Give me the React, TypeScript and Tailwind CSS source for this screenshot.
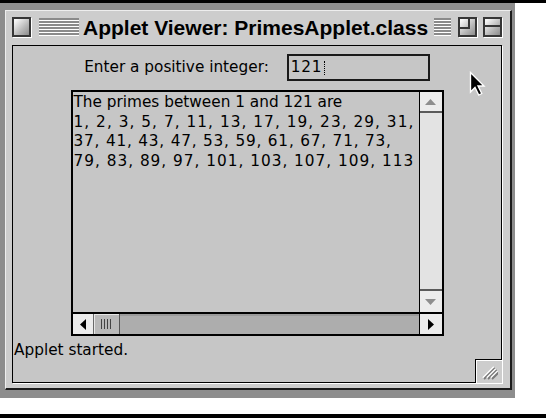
import React from 'react'

// ── Title bar bits ─────────────────────────────────────────────

function Stripes({ className }: { className: string }) {
  return (
    <div className={`flex flex-col ${className}`}>
      {[0, 1, 2, 3, 4, 5].map((i) => (
        <div key={i} className="h-[3px] border-b border-white bg-[#8a8a8a]" />
      ))}
    </div>
  )
}

function BoxButton({ kind }: { kind: 'close' | 'zoom' | 'collapse' }) {
  return (
    <div className="relative h-[20px] w-[19px] border-2 border-[#363636] bg-[linear-gradient(135deg,#f6f6f6_10%,#b8b8b8_60%,#8c8c8c)] shadow-[1px_1px_0_#ffffff]">
      {kind === 'zoom' && (
        <div className="absolute left-0 top-0 h-[10px] w-[10px] border-b-2 border-r-2 border-[#363636]" />
      )}
      {kind === 'collapse' && (
        <div className="absolute left-0 right-0 top-[6px] h-[2px] bg-[#363636]" />
      )}
    </div>
  )
}

// ── Scrollbar bits ─────────────────────────────────────────────

function Triangle({ dir, color }: { dir: 'up' | 'down' | 'left' | 'right'; color: string }) {
  const paths = {
    up: 'M0 6 L5.5 0 L11 6 Z',
    down: 'M0 0 L11 0 L5.5 6 Z',
    left: 'M6 0 L6 11 L0 5.5 Z',
    right: 'M0 0 L0 11 L6 5.5 Z',
  }
  const vertical = dir === 'up' || dir === 'down'
  return (
    <svg width={vertical ? 11 : 6} height={vertical ? 6 : 11} viewBox={vertical ? '0 0 11 6' : '0 0 6 11'}>
      <path d={paths[dir]} fill={color} />
    </svg>
  )
}

function VScroll() {
  return (
    <div className="flex w-[23px] flex-col border-l border-black bg-[#e3e3e3]">
      <div className="flex h-[21px] items-center justify-center border-b-2 border-[#5a5a5a] bg-[#ececec]">
        <Triangle dir="up" color="#8e8e8e" />
      </div>
      <div className="flex-1" />
      <div className="flex h-[23px] items-center justify-center border-t-2 border-[#5a5a5a] bg-[#ececec]">
        <Triangle dir="down" color="#8e8e8e" />
      </div>
    </div>
  )
}

function HScroll() {
  return (
    <div className="flex h-[22px] border-t-2 border-black">
      <div className="flex w-[21px] items-center justify-center border-r border-[#6a6a6a] bg-[#ececec]">
        <Triangle dir="left" color="#000000" />
      </div>
      <div className="flex w-[26px] items-center justify-center gap-[2px] border-r border-[#555] bg-[#b9b9b9] shadow-[inset_1px_1px_0_#e6e6e6]">
        {[0, 1, 2, 3].map((i) => (
          <div key={i} className="h-[10px] w-[1px] bg-[#444]" />
        ))}
      </div>
      <div className="flex-1 bg-[#adadad] shadow-[inset_0_2px_0_#9a9a9a]" />
      <div className="flex w-[23px] items-center justify-center border-l border-black bg-[#ececec]">
        <Triangle dir="right" color="#000000" />
      </div>
    </div>
  )
}

function GrowIcon() {
  return (
    <svg width="17" height="17" viewBox="0 0 17 17">
      {[0, 4, 8].map((o) => (
        <g key={o}>
          <path d={`M${2 + o} ${15} L${13 + o / 2} ${4 + o / 2}`} stroke="#ffffff" strokeWidth="2" />
          <path d={`M${3 + o} ${16} L${14 + o / 2} ${5 + o / 2}`} stroke="#7a7a7a" strokeWidth="2" />
        </g>
      ))}
    </svg>
  )
}

function Cursor() {
  return (
    <svg width="18" height="27" viewBox="0 0 12 18" className="absolute left-[469px] top-[71px]">
      <path
        d="M1 1 L1 14 L4 11 L6.5 16 L8.5 15 L6 10 L10 10 Z"
        fill="#000000"
        stroke="#ffffff"
        strokeWidth="0.9"
        strokeLinejoin="miter"
      />
    </svg>
  )
}

// ── Main page ──────────────────────────────────────────────────

export default function App() {
  const lines = [
    { text: 'The primes between 1 and 121 are', track: '' },
    { text: '1, 2, 3, 5, 7, 11, 13, 17, 19, 23, 29, 31,', track: 'tracking-[1.05px]' },
    { text: '37, 41, 43, 47, 53, 59, 61, 67, 71, 73,', track: 'tracking-[0.8px]' },
    { text: '79, 83, 89, 97, 101, 103, 107, 109, 113', track: 'tracking-[1px]' },
  ]

  return (
    <div className="relative flex h-[418px] w-[546px] flex-col overflow-hidden bg-white font-['DejaVu_Sans',sans-serif] text-black">
      <div className="h-[3px] bg-black" />

      {/* Desktop strip round the window */}
      <div className="h-[395px] w-[515px] bg-[#8d8d8d] pl-[5px] pt-[7px]">
        <div className="flex h-[380px] w-[507px] flex-col border-l border-t border-[#eeeeee] border-b-2 border-r-2 border-b-[#1c1c1c] border-r-[#1c1c1c] bg-[#cdcdcd]">
          {/* Title bar */}
          <div className="flex h-[32px] items-center pl-[6px] pr-[8px]">
            <BoxButton kind="close" />
            <Stripes className="ml-[8px] w-[40px]" />
            <span className="ml-[4px] font-['Liberation_Sans',sans-serif] text-[21px] font-bold leading-none">
              Applet Viewer: PrimesApplet.class
            </span>
            <Stripes className="ml-[6px] flex-1" />
            <div className="ml-[7px]">
              <BoxButton kind="zoom" />
            </div>
            <div className="ml-[6px]">
              <BoxButton kind="collapse" />
            </div>
          </div>

          {/* Content */}
          <div className="relative ml-[6px] mt-[2px] h-[338px] w-[490px] border border-black bg-[#c6c6c6] shadow-[1px_1px_0_#ffffff]">
            <div className="flex h-full flex-col items-center pt-[8px]">
              <div className="flex items-center gap-[18px]">
                <span className="text-[15.3px]">Enter a positive integer:</span>
                <div className="flex h-[27px] w-[143px] items-center border-2 border-[#1a1a1a] pl-[2px]">
                  <span className="text-[15.3px] tracking-[0.7px]">121</span>
                  <div className="ml-[2px] h-[14px] border-l border-dotted border-black" />
                </div>
              </div>

              <div className="mt-[9px] flex h-[246px] w-[373px] flex-col border-2 border-black">
                <div className="flex min-h-0 flex-1">
                  <div className="min-w-0 flex-1 overflow-hidden whitespace-nowrap pl-[1px] pt-[1px] text-[15.3px] leading-[19.5px]">
                    {lines.map((l) => (
                      <div key={l.text} className={l.track}>
                        {l.text}
                      </div>
                    ))}
                  </div>
                  <VScroll />
                </div>
                <HScroll />
              </div>

              <div className="mt-[5px] self-start pl-[1px] text-[15.3px] leading-[18px]">Applet started.</div>
            </div>

            {/* Grow box notch */}
            <div className="absolute bottom-[-1px] right-[-1px] flex h-[24px] w-[27px] items-center justify-center border-l border-t border-black bg-[#cdcdcd] shadow-[inset_1px_1px_0_#ffffff]">
              <GrowIcon />
            </div>
          </div>
        </div>
      </div>

      <div className="flex-1" />
      <div className="h-[4px] bg-black" />
      <Cursor />
    </div>
  )
}
